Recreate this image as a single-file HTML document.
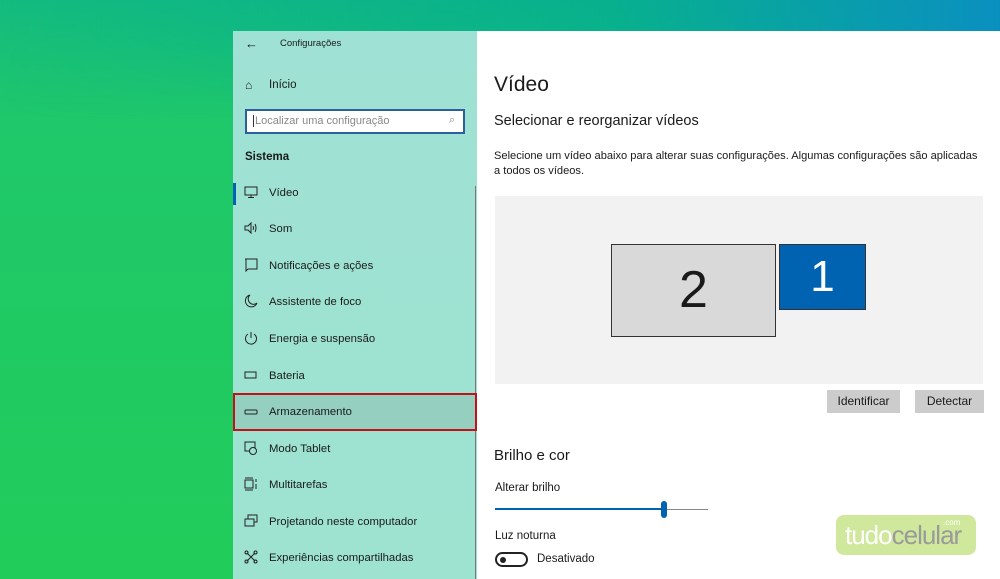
<!DOCTYPE html>
<html><head><meta charset="utf-8"><style>
*{margin:0;padding:0;box-sizing:border-box}
body{width:1000px;height:579px;overflow:hidden;position:relative;font-family:"Liberation Sans",sans-serif;
background:linear-gradient(180deg,#14bb80 0px,#1fc86a 120px,#22cc5a 579px);}
.topbg{position:absolute;left:0;top:0;width:1000px;height:120px;background:linear-gradient(90deg,rgba(20,190,110,0) 0%,rgba(0,170,150,0.6) 60%,#0a90c0 100%);-webkit-mask-image:linear-gradient(180deg,#000 0,#000 30px,transparent 120px);mask-image:linear-gradient(180deg,#000 0,#000 30px,transparent 120px)}
.side{position:absolute;left:233px;top:31px;width:244px;height:548px;background:linear-gradient(180deg,#9fe2d5,#9ee3d0);color:#1a1a1a}
.main{position:absolute;left:477px;top:31px;width:523px;height:548px;background:#fff;color:#1a1a1a}
.t{position:absolute;white-space:nowrap}
.item{position:absolute;left:0;width:244px;height:36px;font-size:11.3px}
.item .ic{position:absolute;left:11px;top:11px;width:14px;height:14px}
.item span{position:absolute;left:36px;top:13px}
</style></head><body>
<div class="topbg"></div>
<div class="side">
 <div class="t" style="left:12px;top:5px;font-size:13px">←</div>
 <div class="t" style="left:47px;top:7px;font-size:9.5px">Configurações</div>
 <div class="t" style="left:12px;top:47px;font-size:12px">⌂</div>
 <div class="t" style="left:36px;top:48px;font-size:11.5px">Início</div>
 <div style="position:absolute;left:12px;top:78px;width:220px;height:25px;background:#fff;border:2px solid #2b5fa0"></div>
 <div class="t" style="left:20px;top:84px;font-size:11px;color:#888;border-left:1px solid #333;padding-left:1px">Localizar uma configuração</div>
 <div class="t" style="left:216px;top:83px;font-size:11px;color:#888">⌕</div>
 <div class="t" style="left:12px;top:120px;font-size:11.5px;font-weight:bold">Sistema</div>
 <div style="position:absolute;left:242px;top:155px;width:1px;height:393px;background:#777"></div>
 <div style="position:absolute;left:0;top:152px;width:3px;height:22px;background:#0063b1"></div>
 <div class="item" style="top:143px"><svg class="ic" viewBox="0 0 14 14"><rect x="1" y="2" width="12" height="8" fill="none" stroke="#222"/><path d="M7 10v2M4 12.5h6" stroke="#222"/></svg><span>Vídeo</span></div>
 <div class="item" style="top:179px"><svg class="ic" viewBox="0 0 14 14"><path d="M1 5h3l3-3v10l-3-3H1z" fill="none" stroke="#222"/><path d="M9 5q1 2 0 4M11 3q2 4 0 8" fill="none" stroke="#222"/></svg><span>Som</span></div>
 <div class="item" style="top:216px"><svg class="ic" viewBox="0 0 14 14"><path d="M1 1h12v10H4l-2 2V1z" fill="none" stroke="#222"/></svg><span>Notificações e ações</span></div>
 <div class="item" style="top:252px"><svg class="ic" viewBox="0 0 14 14"><path d="M6 1a6 6 0 1 0 7 8A5 5 0 0 1 6 1z" fill="none" stroke="#222"/></svg><span>Assistente de foco</span></div>
 <div class="item" style="top:289px"><svg class="ic" viewBox="0 0 14 14"><path d="M4 3a5.5 5.5 0 1 0 6 0M7 1v6" fill="none" stroke="#222"/></svg><span>Energia e suspensão</span></div>
 <div class="item" style="top:326px"><svg class="ic" viewBox="0 0 14 14"><rect x="1" y="4" width="11" height="6" fill="none" stroke="#222"/></svg><span>Bateria</span></div>
 <div class="item" style="top:362px;background:#94cfc0;border:2px solid #c1121a;height:38px"><svg class="ic" viewBox="0 0 14 14" style="left:9px;top:10px"><rect x="1" y="5" width="12" height="4" rx="1" fill="none" stroke="#222"/></svg><span style="left:34px;top:11px">Armazenamento</span></div>
 <div class="item" style="top:399px"><svg class="ic" viewBox="0 0 14 14"><rect x="1" y="1" width="10" height="9" fill="none" stroke="#222"/><circle cx="9" cy="10" r="3.5" fill="#9fe2d5" stroke="#222"/></svg><span>Modo Tablet</span></div>
 <div class="item" style="top:435px"><svg class="ic" viewBox="0 0 14 14"><rect x="1" y="3" width="8" height="8" fill="none" stroke="#222"/><path d="M1 1h8M1 13h8M12 2v3M12 7v5" stroke="#222"/></svg><span>Multitarefas</span></div>
 <div class="item" style="top:472px"><svg class="ic" viewBox="0 0 14 14"><rect x="4" y="1" width="9" height="7" fill="none" stroke="#222"/><rect x="1" y="5" width="9" height="7" fill="#9fe2d5" stroke="#222"/></svg><span>Projetando neste computador</span></div>
 <div class="item" style="top:508px"><svg class="ic" viewBox="0 0 14 14"><path d="M3 3l8 8M11 3l-8 8" stroke="#222"/><circle cx="2.5" cy="2.5" r="1.5" fill="none" stroke="#222"/><circle cx="11.5" cy="2.5" r="1.5" fill="none" stroke="#222"/><circle cx="2.5" cy="11.5" r="1.5" fill="none" stroke="#222"/><circle cx="11.5" cy="11.5" r="1.5" fill="none" stroke="#222"/></svg><span>Experiências compartilhadas</span></div>
</div>
<div class="main">
 <div class="t" style="left:17px;top:42px;font-size:21px">Vídeo</div>
 <div class="t" style="left:17px;top:82px;font-size:14.5px">Selecionar e reorganizar vídeos</div>
 <div class="t" style="left:17px;top:118px;font-size:11.1px;line-height:15px">Selecione um vídeo abaixo para alterar suas configurações. Algumas configurações são aplicadas<br>a todos os vídeos.</div>
 <div style="position:absolute;left:18px;top:165px;width:488px;height:188px;background:#f2f2f2"></div>
 <div style="position:absolute;left:134px;top:213px;width:165px;height:93px;background:#d9d9d9;border:1px solid #333;font-size:52px;text-align:center;line-height:90px;font-weight:300">2</div>
 <div style="position:absolute;left:302px;top:213px;width:87px;height:66px;background:#0063b1;border:1px solid #333;color:#fff;font-size:44px;text-align:center;line-height:64px">1</div>
 <div style="position:absolute;left:350px;top:359px;width:73px;height:23px;background:#ccc;font-size:12px;text-align:center;line-height:23px">Identificar</div>
 <div style="position:absolute;left:438px;top:359px;width:69px;height:23px;background:#ccc;font-size:12px;text-align:center;line-height:23px">Detectar</div>
 <div class="t" style="left:17px;top:416px;font-size:15px">Brilho e cor</div>
 <div class="t" style="left:18px;top:451px;font-size:11.5px">Alterar brilho</div>
 <div style="position:absolute;left:18px;top:477px;width:169px;height:2px;background:#0063b1"></div>
 <div style="position:absolute;left:187px;top:478px;width:44px;height:1px;background:#888"></div>
 <div style="position:absolute;left:184px;top:470px;width:6px;height:17px;border-radius:3px;background:#0063b1"></div>
 <div class="t" style="left:18px;top:499px;font-size:11.5px">Luz noturna</div>
 <div style="position:absolute;left:18px;top:521px;width:33px;height:15px;border:2px solid #222;border-radius:8px"></div>
 <div style="position:absolute;left:23px;top:526px;width:6px;height:6px;border-radius:3px;background:#222"></div>
 <div class="t" style="left:60px;top:522px;font-size:11.5px">Desativado</div>
 <div style="position:absolute;left:359px;top:484px;width:140px;height:40px;border-radius:8px;background:#cfe89c"></div>
 <div class="t" style="left:368px;top:489px;font-size:26px;color:#fff;letter-spacing:-1px">tudo<span style="color:#9a9a9a">celular</span></div>
 <div class="t" style="left:466px;top:487px;font-size:8px;color:#fff">.com</div>
</div>
</body></html>
